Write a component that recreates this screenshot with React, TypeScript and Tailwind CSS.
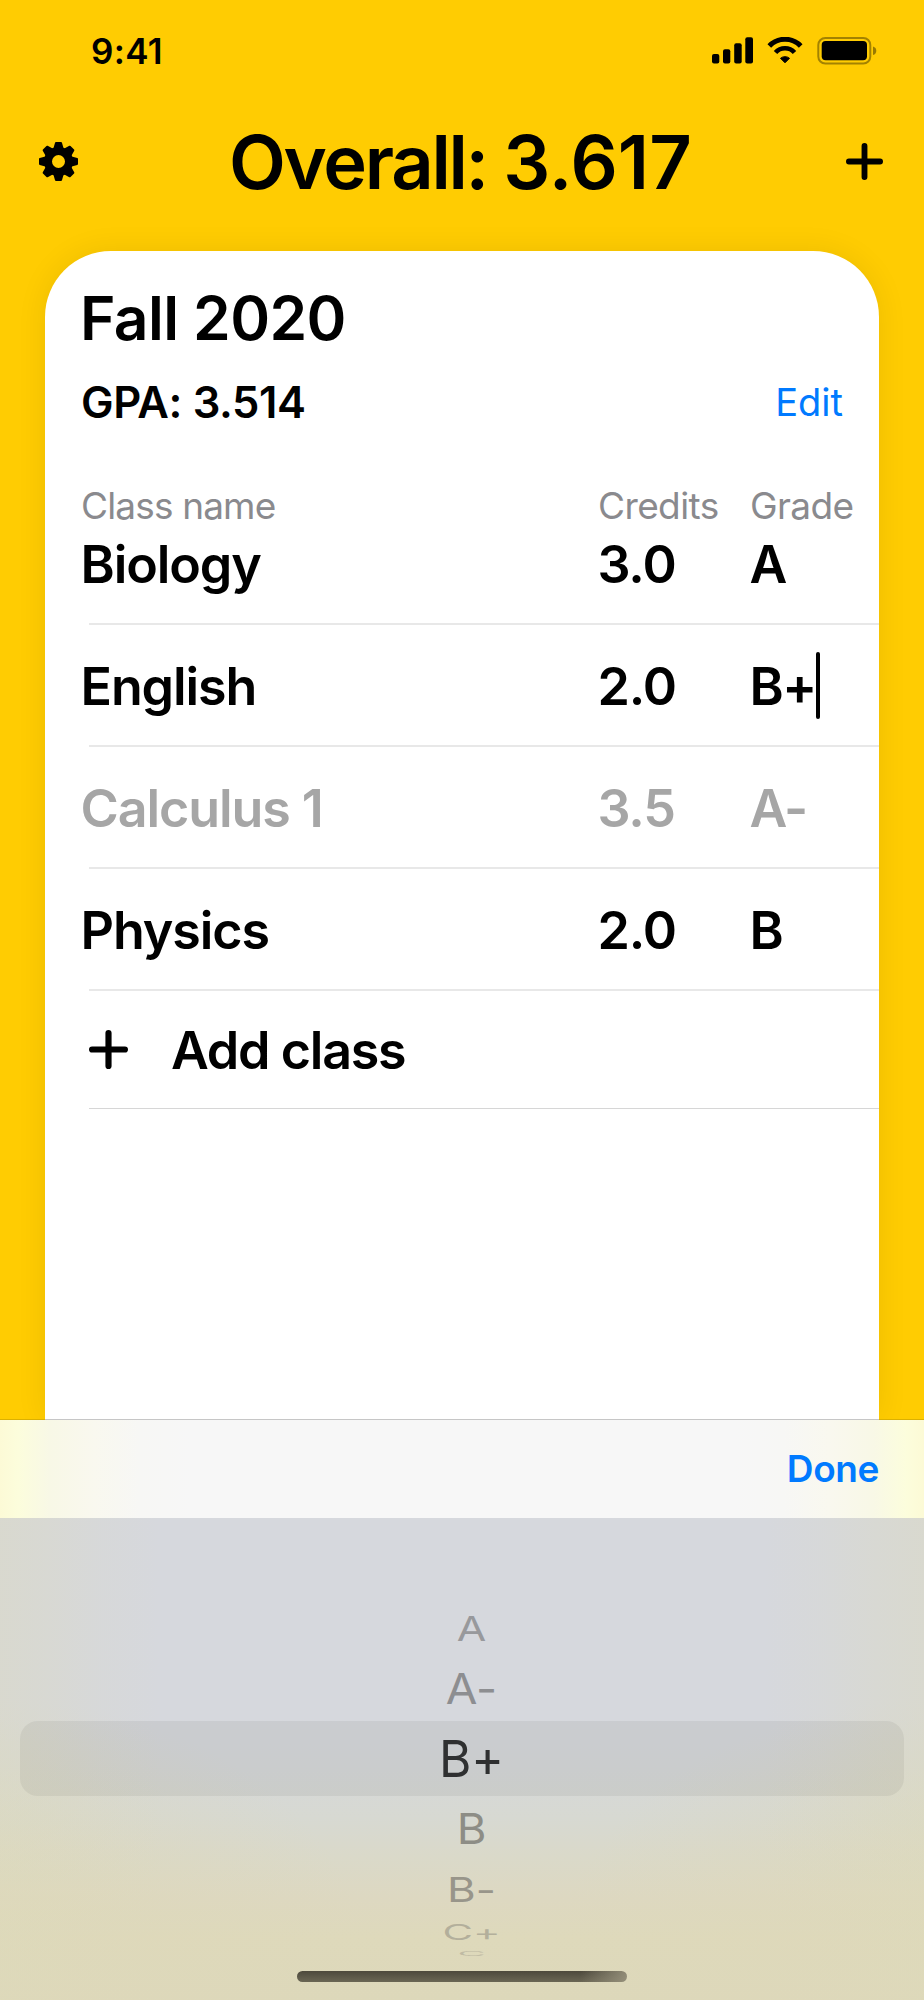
type Course = { name: string; credits: string; grade: string; muted?: boolean; editing?: boolean };

const courses: Course[] = [
  { name: "Biology", credits: "3.0", grade: "A" },
  { name: "English", credits: "2.0", grade: "B+", editing: true },
  { name: "Calculus 1", credits: "3.5", grade: "A-", muted: true },
  { name: "Physics", credits: "2.0", grade: "B" },
];

// Wheel rows, flattened more the further they sit from the selection
const wheel = [
  { label: "A", row: "h-[54px]", text: "scale-x-[0.84] scale-y-[0.67] text-[#98999c]" },
  { label: "A-", row: "h-[66px]", text: "scale-x-[0.9] scale-y-[0.84] text-[#8d8e91]" },
  { label: "B+", row: "h-[75px] w-[884px] rounded-[18px] bg-black/[0.055]", text: "scale-x-[0.97] text-[#2f3031]" },
  { label: "B", row: "h-[65px]", text: "scale-x-[0.89] scale-y-[0.82] text-[#8d8d86]" },
  { label: "B-", row: "h-[56px]", text: "scale-x-[0.86] scale-y-[0.66] text-[#98958a]" },
  { label: "C+", row: "h-[30px]", text: "scale-x-[0.82] scale-y-[0.41] text-[#b3af9b]" },
  { label: "C", row: "h-[12px]", text: "scale-x-[0.76] scale-y-[0.13] text-[#bfbaa3]" },
];

const teeth = [0, 45, 90, 135, 180, 225, 270, 315];

function GearIcon() {
  return (
    <svg width="39" height="39" viewBox="-19.5 -19.5 39 39">
      <circle r="10.500" fill="none" stroke="black" strokeWidth="8" />
      {teeth.map((angle) => (
        <path
          key={angle}
          d="M-2.500 -18.500 L2.500 -18.500 L4.400 -12 L-4.400 -12 Z"
          transform={`rotate(${angle})`}
          stroke="black"
          strokeWidth="2"
          strokeLinejoin="round"
        />
      ))}
    </svg>
  );
}

function PlusIcon({ size }: { size: number }) {
  return (
    <svg width={size} height={size} viewBox="0 0 38 38" fill="none" stroke="black" strokeWidth="6" strokeLinecap="round">
      <path d="M19 3V35M3 19H35" />
    </svg>
  );
}

function StatusBar() {
  return (
    <div className="flex h-[102px] items-center justify-between pl-[91px] pr-[47px]">
      <span className="text-[35px] font-semibold leading-none tracking-[0.3px] [font-feature-settings:normal]">9:41</span>
      <svg width="166" height="28" viewBox="0 0 166 28">
        <rect x="1" y="17" width="7.300" height="9.500" rx="2" />
        <rect x="12" y="12.300" width="7.300" height="14.200" rx="2" />
        <rect x="23.200" y="6.200" width="7.500" height="20.300" rx="2" />
        <rect x="34.300" y="0.300" width="7.700" height="26.200" rx="2" />
        <g fill="none" stroke="black">
          <path d="M58.300 9 A21.600 21.600 0 0 1 89.700 9" strokeWidth="5" />
          <path d="M64.500 15.500 A12.700 12.700 0 0 1 83.500 15.500" strokeWidth="4.600" />
        </g>
        <path d="M74 25.800 L69.500 21.300 A7 7 0 0 1 78.500 21.300 Z" stroke="black" strokeWidth="1" strokeLinejoin="round" />
        <rect x="107.300" y="1" width="52" height="25.500" rx="7" fill="none" stroke="black" strokeOpacity="0.36" strokeWidth="2" />
        <rect x="110.700" y="4" width="45.300" height="19.300" rx="4" />
        <path d="M162 9.500 Q165.300 10.500 165.300 13.700 Q165.300 17 162 18 Z" fillOpacity="0.4" />
      </svg>
    </div>
  );
}

function CourseRow({ course }: { course: Course }) {
  return (
    <div>
      <div
        className={
          "grid h-[120px] grid-cols-[517px_152px_auto] items-center pt-[3px] pl-[35.500px] text-[52px] leading-none font-semibold tracking-[-1.100px] " +
          (course.muted ? "text-[#a6a6a6]" : "text-black")
        }
      >
        <span>{course.name}</span>
        <span>{course.credits}</span>
        <span className="flex h-[52px] items-center tracking-[-1.500px]">
          {course.grade}
          {course.editing ? <i className="mb-[3px] h-[67px] w-[4.500px] shrink-0 rounded-full bg-black" /> : null}
        </span>
      </div>
      <div className="ml-[44px] h-[2px] bg-[#e8e8e8]" />
    </div>
  );
}

function GradePicker() {
  return (
    <section>
      <div className="h-px bg-[linear-gradient(to_right,#dbb002_45px,#c6c6c6_45px,#c6c6c6_879px,#dbb002_879px)]" />
      <div className="flex h-[98px] items-center justify-end bg-[linear-gradient(to_right,#fcfad6,#fcfddc_18px,#f8f8e6_50px,#f9f8ef_95px,#f7f7f5_140px,#f7f7f7_190px,#f7f7f7_734px,#f7f7f5_784px,#f9f8ef_829px,#f8f8e6_874px,#fcfddc_906px,#fcfad6)] pr-[45px]">
        <span className="mb-[2px] text-[37px] leading-none font-semibold tracking-[-0.400px] text-[#007aff]">Done</span>
      </div>
      <div className="bg-[linear-gradient(to_bottom,#d6d8dd_200px,#d6d8d9_250px,#d7d9d2_300px,#dad9c9_340px,#ddd8c1_380px,#ded9bb_420px,#ddd8ba)]">
        <div className="bg-[radial-gradient(380px_300px_at_0%_100%,rgba(222,216,186,0.85),rgba(222,216,186,0)),radial-gradient(380px_300px_at_100%_100%,rgba(222,216,186,0.85),rgba(222,216,186,0))]">
          <div className="flex h-[482px] flex-col items-center bg-[linear-gradient(to_right,rgba(221,218,186,0.4),rgba(221,218,186,0.28)_50px,rgba(221,218,186,0.12)_100px,rgba(221,218,186,0)_160px,rgba(221,218,186,0)_764px,rgba(221,218,186,0.12)_824px,rgba(221,218,186,0.28)_874px,rgba(221,218,186,0.4))] pt-[83px] text-[51px] leading-none">
            {wheel.map((item) => (
              <div key={item.label} className={"flex shrink-0 items-center justify-center pl-[19px] " + item.row}>
                <span className={item.text}>{item.label}</span>
              </div>
            ))}
            <div className="mt-[12px] h-[11px] w-[330px] shrink-0 rounded-full bg-[linear-gradient(to_right,transparent_86%,rgba(160,154,132,0.8)),linear-gradient(to_bottom,#4d493c,#6a6654)]" />
          </div>
        </div>
      </div>
    </section>
  );
}

export default function App() {
  return (
    <div className="flex h-[2000px] w-[924px] flex-col overflow-hidden bg-[#ffcc02] font-['Inter',sans-serif] text-black [font-feature-settings:'calt'_0]">
      <StatusBar />
      <header className="flex h-[120px] items-center justify-between pr-[41px] pb-px pl-[39px]">
        <GearIcon />
        <h1 className="pr-[3px] text-[74px] leading-none font-semibold tracking-[-2.300px]">
          Overall: <span className="tracking-[0.100px]">3.617</span>
        </h1>
        <PlusIcon size={37} />
      </header>
      <main className="mx-[45px] mt-[29px] h-[1168px] shrink-0 rounded-t-[66px] bg-white shadow-[0_0_30px_rgba(0,0,0,0.08)]">
        <h2 className="h-[99px] pt-[35px] pl-[35px] text-[60.500px] leading-[64px] font-semibold tracking-[-0.600px]">Fall 2020</h2>
        <div className="mt-[28px] flex h-[48px] items-center justify-between pr-[36px] pl-[36px] leading-none">
          <span className="pt-[2px] text-[43.500px] font-semibold tracking-[-0.400px]">GPA: 3.514</span>
          <span className="text-[38px] text-[#007aff]">Edit</span>
        </div>
        <div className="mt-[57px] -mb-[24px] grid h-[44px] grid-cols-[517px_152px_auto] items-center pl-[36px] text-[37px] leading-none tracking-[-0.600px] text-[#8a8a8e]">
          <span className="tracking-[-0.850px]">Class name</span>
          <span>Credits</span>
          <span>Grade</span>
        </div>
        {courses.map((course) => (
          <CourseRow key={course.name} course={course} />
        ))}
        <div className="flex h-[117px] items-center gap-[43px] pl-[44px] text-[52px] leading-none font-semibold tracking-[-1.300px]">
          <PlusIcon size={39} />
          <span className="pt-[2px]">Add class</span>
        </div>
        <div className="ml-[44px] h-px bg-[#d6d6d6]" />
      </main>
      <GradePicker />
    </div>
  );
}
